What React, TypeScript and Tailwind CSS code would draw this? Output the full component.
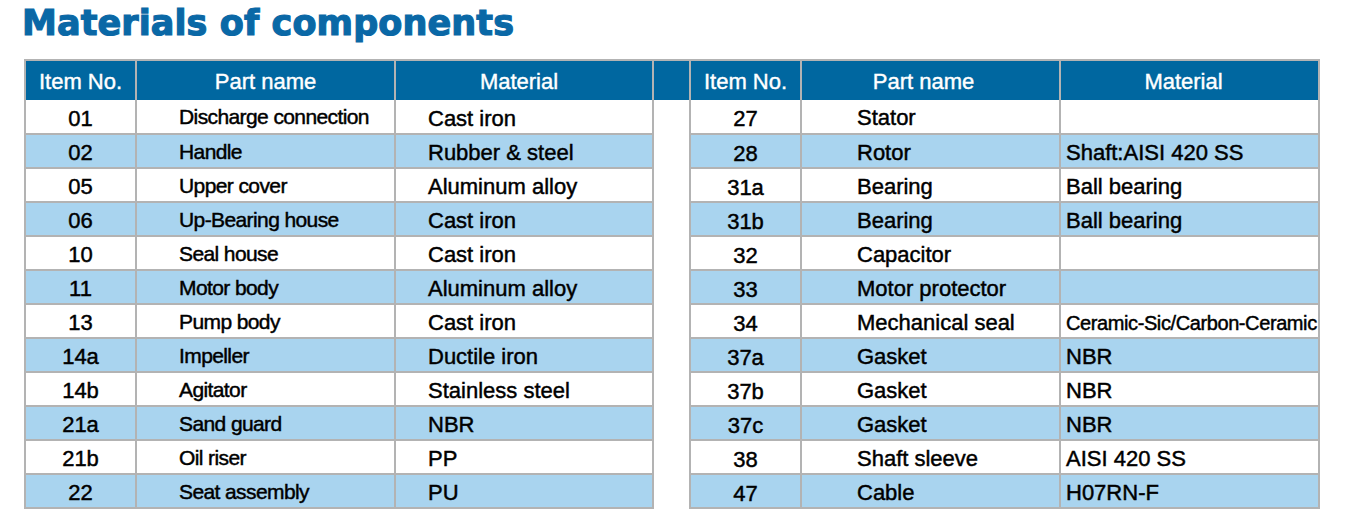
import React from "react";

type Row = [string, string, string];

const left: Row[] = [
  ["01", "Discharge connection", "Cast iron"],
  ["02", "Handle", "Rubber & steel"],
  ["05", "Upper cover", "Aluminum alloy"],
  ["06", "Up-Bearing house", "Cast iron"],
  ["10", "Seal house", "Cast iron"],
  ["11", "Motor body", "Aluminum alloy"],
  ["13", "Pump body", "Cast iron"],
  ["14a", "Impeller", "Ductile iron"],
  ["14b", "Agitator", "Stainless steel"],
  ["21a", "Sand guard", "NBR"],
  ["21b", "Oil riser", "PP"],
  ["22", "Seat assembly", "PU"],
];

const right: Row[] = [
  ["27", "Stator", ""],
  ["28", "Rotor", "Shaft:AISI 420 SS"],
  ["31a", "Bearing", "Ball bearing"],
  ["31b", "Bearing", "Ball bearing"],
  ["32", "Capacitor", ""],
  ["33", "Motor protector", ""],
  ["34", "Mechanical seal", "Ceramic-Sic/Carbon-Ceramic"],
  ["37a", "Gasket", "NBR"],
  ["37b", "Gasket", "NBR"],
  ["37c", "Gasket", "NBR"],
  ["38", "Shaft sleeve", "AISI 420 SS"],
  ["47", "Cable", "H07RN-F"],
];

const cell = "border-2 border-[#b3b3b3] p-0 align-middle";

export default function App() {
  return (
    <div className="w-[1346px] h-[527px] bg-white overflow-hidden font-['Liberation_Sans',Arial,sans-serif] text-black">
      <h1 className="pl-[22px] pt-[3px] h-[59px] font-['DejaVu_Sans',sans-serif] font-bold text-[35px] leading-[40px] text-[#0a68a6] tracking-[0.1px] [-webkit-text-stroke:1.2px_#0a68a6]">
        Materials of components
      </h1>
      <table className="ml-[24px] table-fixed border-collapse">
        <colgroup>
          <col className="w-[111px]" />
          <col className="w-[259px]" />
          <col className="w-[258px]" />
          <col className="w-[37px]" />
          <col className="w-[111px]" />
          <col className="w-[259px]" />
          <col className="w-[259px]" />
        </colgroup>
        <thead>
          <tr className="h-[40px] bg-[#0067a0] text-white text-[22px] [-webkit-text-stroke:0.4px_white]">
            <th className={`${cell} border-b-0 font-normal text-center pt-[2px]`}>Item No.</th>
            <th className={`${cell} border-b-0 font-normal text-center pt-[2px]`}>Part name</th>
            <th className={`${cell} border-b-0 font-normal text-center pt-[2px] pr-[10px]`}>Material</th>
            <th className={`${cell} border-b-0`}></th>
            <th className={`${cell} border-b-0 font-normal text-center pt-[2px]`}>Item No.</th>
            <th className={`${cell} border-b-0 font-normal text-center pt-[2px] pr-[14px]`}>Part name</th>
            <th className={`${cell} border-b-0 font-normal text-center pt-[2px] pr-[12px]`}>Material</th>
          </tr>
        </thead>
        <tbody className="[-webkit-text-stroke:0.45px_black]">
          {left.map((l, i) => {
            const r = right[i];
            const bg = i % 2 === 1 ? "bg-[#a9d4ef]" : "bg-white";
            const top = i === 0 ? "border-t-0" : "";
            return (
              <tr key={i} className="h-[34px] text-[22px] leading-[24px]">
                <td className={`${cell} ${bg} ${top} text-center pt-[4px]`}>{l[0]}</td>
                <td className={`${cell} ${bg} ${top} pl-[42px] pt-[1px] text-[21px] tracking-[-0.6px]`}>{l[1]}</td>
                <td className={`${cell} ${bg} ${top} pl-[32px] pt-[4px]`}>{l[2]}</td>
                <td className="border-x-2 border-y-0 border-[#b3b3b3] bg-white p-0"></td>
                <td className={`${cell} ${bg} ${top} text-center pt-[5px]`}>{r[0]}</td>
                <td className={`${cell} ${bg} ${top} pl-[55px] pt-[3px]`}>{r[1]}</td>
                <td
                  className={`${cell} ${bg} ${top} pl-[5px] pt-[3px] whitespace-nowrap ${
                    r[2].length > 20 ? "text-[20px] tracking-[-0.4px]" : ""
                  }`}
                >
                  {r[2]}
                </td>
              </tr>
            );
          })}
        </tbody>
      </table>
    </div>
  );
}
